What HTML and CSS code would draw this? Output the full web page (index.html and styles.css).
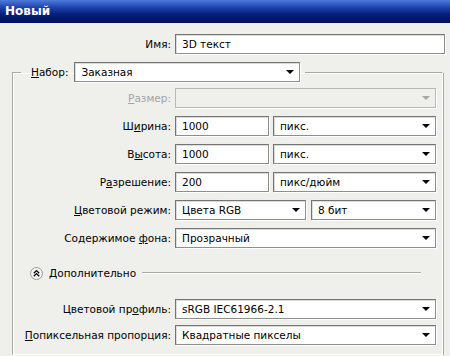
FILE: index.html
```html
<!DOCTYPE html>
<html lang="ru">
<head>
  <meta charset="UTF-8" />
  <title>Новый</title>
  <link rel="stylesheet" href="styles.css">
</head>
<body>
  <div class="titlebar">Новый</div>

  <div class="dialog">
    <div class="row name-row">
      <label class="label">Имя:</label>
      <div class="field input">3D текст</div>
    </div>

    <fieldset class="group">
      <legend class="preset">
        <label class="label"><u>Н</u>абор:</label>
        <div class="field select preset-select">Заказная</div>
      </legend>

      <div class="row">
        <label class="label disabled"><u>Р</u>азмер:</label>
        <div class="field select off"></div>
      </div>

      <div class="row">
        <label class="label">Ш<u>и</u>рина:</label>
        <div class="pair">
          <div class="field input num">1000</div>
          <div class="field select">пикс.</div>
        </div>
      </div>

      <div class="row">
        <label class="label">В<u>ы</u>сота:</label>
        <div class="pair">
          <div class="field input num">1000</div>
          <div class="field select">пикс.</div>
        </div>
      </div>

      <div class="row">
        <label class="label">Р<u>а</u>зрешение:</label>
        <div class="pair">
          <div class="field input num">200</div>
          <div class="field select">пикс/дюйм</div>
        </div>
      </div>

      <div class="row">
        <label class="label"><u>Ц</u>ветовой режим:</label>
        <div class="pair mode">
          <div class="field select">Цвета RGB</div>
          <div class="field select">8 бит</div>
        </div>
      </div>

      <div class="row">
        <label class="label">Содержимое <u>ф</u>она:</label>
        <div class="field select">Прозрачный</div>
      </div>

      <div class="advanced">
        <svg class="toggle" width="13" height="13" viewBox="0 0 13 13">
          <circle cx="6.5" cy="6.5" r="6" fill="#f4f4f2" stroke="#9a9a9a"/>
          <path d="M3.8 6.2 L6.5 3.6 L9.2 6.2 M3.8 9.2 L6.5 6.6 L9.2 9.2" fill="none" stroke="#000" stroke-width="1.3"/>
        </svg>
        <span>Дополнительно</span>
        <div class="rule"></div>
      </div>

      <div class="row tight">
        <label class="label">Цветовой пр<u>о</u>филь:</label>
        <div class="field select">sRGB IEC61966-2.1</div>
      </div>

      <div class="row tight">
        <label class="label"><u>П</u>опиксельная пропорция:</label>
        <div class="field select">Квадратные пикселы</div>
      </div>
    </fieldset>
  </div>
</body>
</html>
```

FILE: styles.css
```css
body {
  margin: 0;
  background-color: #efefec;
  font-family: 'DejaVu Sans', sans-serif;
  font-size: 10.5px;
  color: #000;
}

.titlebar {
  height: 23px;
  line-height: 23px;
  padding-left: 5px;
  color: #fff;
  font-weight: bold;
  font-size: 12px;
  background: linear-gradient(to bottom, #4d7bd9 0%, #2146b0 30%, #07207f 60%, #020f5c 100%);
}

.dialog {
  padding-top: 11px;
}

.row {
  display: flex;
  align-items: center;
  gap: 4px;
  height: 20px;
  margin-bottom: 8px;
}

.row.tight {
  margin-bottom: 6px;
}

.label {
  flex-shrink: 0;
  width: 158px;
  text-align: right;
  white-space: nowrap;
}

.name-row .label {
  width: 171px;
}

.label.disabled {
  color: #a3a3a3;
}

.field {
  box-sizing: border-box;
  height: 20px;
  line-height: 18px;
  padding: 0 6px;
  background: #fff;
  border: 1px solid #8e8e8e;
  border-top-color: #747474;
  border-left-color: #747474;
  box-shadow: 1px 1px 0 #fff, inset 1px 1px 0 #dcdcdc;
  white-space: nowrap;
  overflow: hidden;
}

.name-row .field {
  width: 270px;
}

.group > .row > .field,
.pair {
  width: 261px;
}

.select {
  position: relative;
  padding-right: 20px;
}

.select::after {
  content: '';
  position: absolute;
  right: 5px;
  top: 7px;
  border-left: 4px solid transparent;
  border-right: 4px solid transparent;
  border-top: 4px solid #000;
}

.select.off {
  background: #efefec;
  border-color: #b8b8b8;
  box-shadow: 1px 1px 0 #fff;
}

.select.off::after {
  border-top-color: #a8a8a8;
}

.pair {
  display: flex;
  gap: 4px;
}

.pair .num {
  width: 94px;
  flex-shrink: 0;
}

.pair .select {
  flex: 1;
}

.mode .select:first-child {
  width: 131px;
  flex: none;
}

.mode {
  gap: 5px;
}

.group {
  width: 431px;
  box-sizing: border-box;
  margin: 4px 0 0 12px;
  padding: 0 5px 3px 0;
  border-color: #a9a9a6 #fff #fff #a9a9a6;
  border-style: solid;
  border-width: 1px;
  box-shadow: inset 1px 1px 0 #fff, 1px 1px 0 #a9a9a6;
}

.preset {
  display: flex;
  align-items: center;
  gap: 6px;
  margin-left: 8px;
  padding: 0 5px 0 10px;
}

.preset .label {
  width: auto;
}

.preset-select {
  width: 226px;
}

.group > .row:first-of-type {
  margin-top: 6px;
}

.advanced {
  display: flex;
  align-items: center;
  height: 14px;
  margin: 18px 16px 19px 17px;
}

.toggle {
  flex-shrink: 0;
  margin-right: 6px;
}

.rule {
  flex: 1;
  height: 0;
  margin-left: 6px;
  border-top: 1px solid #a9a9a6;
  border-bottom: 1px solid #fff;
}
```
